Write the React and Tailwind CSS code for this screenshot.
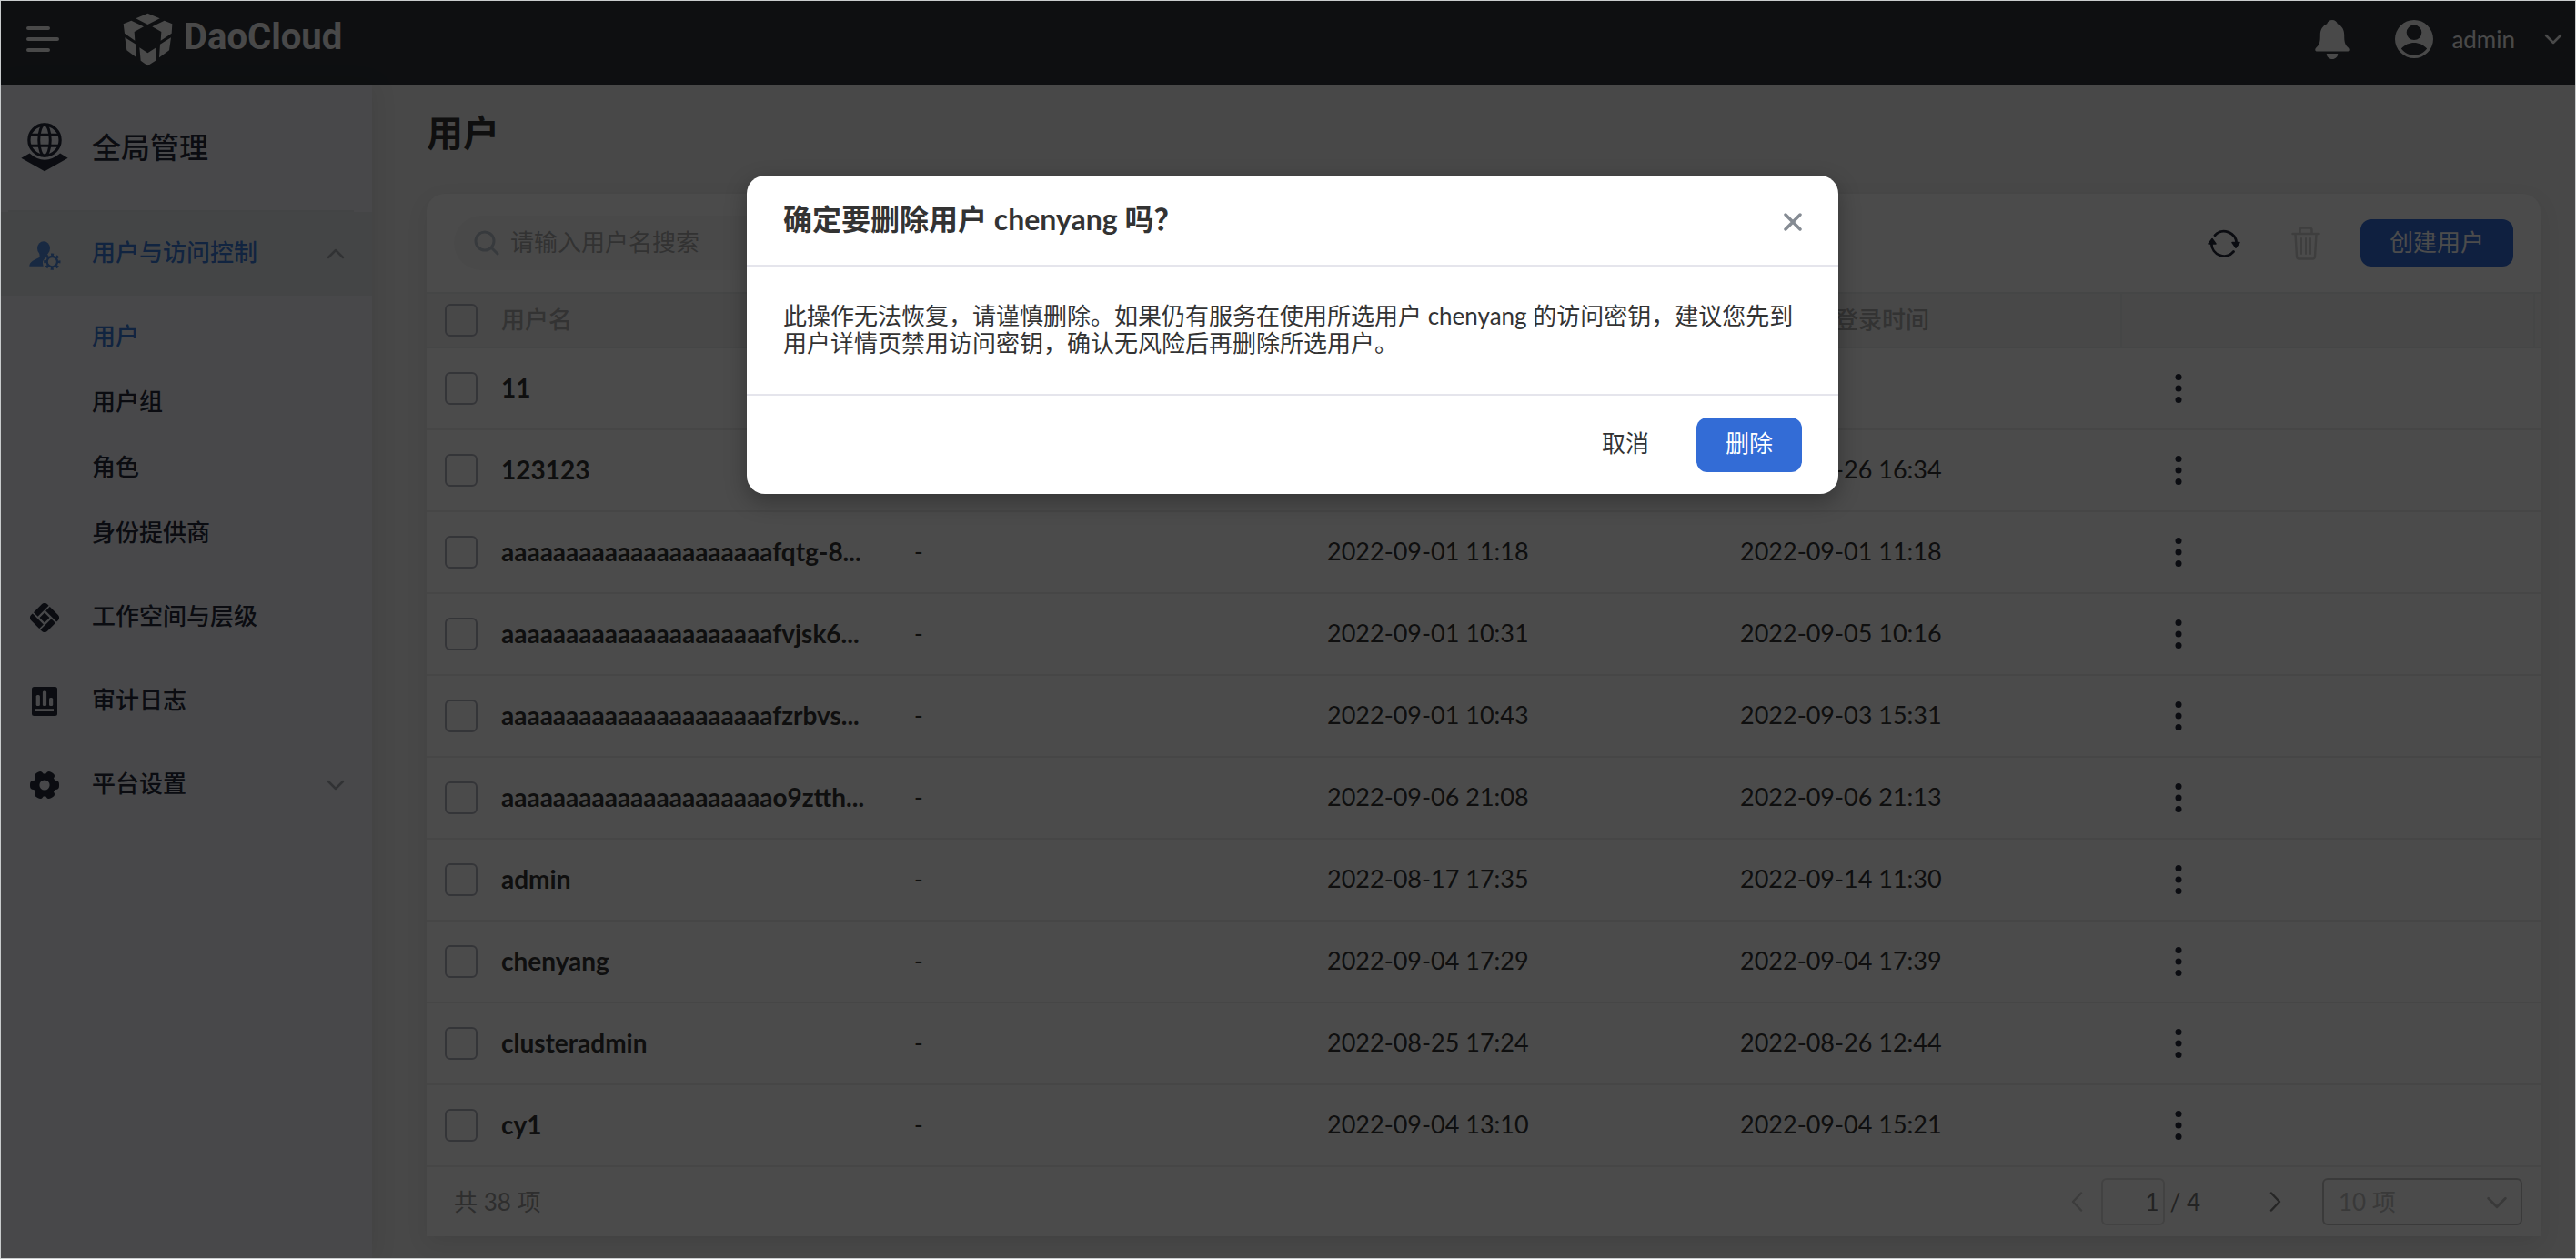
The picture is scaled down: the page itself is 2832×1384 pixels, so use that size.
import React from 'react';

const navIcon = 'text-[#252b3b]';

function Logo() {
  return (
    <svg viewBox="405 39 165 177" className="h-[59px] w-[55px] fill-current" aria-hidden="true">
      <path d="M448 58 487 41l40 17-40 20z" />
      <path d="m407 76 26-11 41 20-31 17 2 29-34-24z" />
      <path d="m568 76-26-11-40 20 30 17-2 29 36-24z" />
      <path d="m412 121 36 22 2 44-32-24z" />
      <path d="m564 121-36 22-3 44 33-24z" />
      <path d="m460 154 27 18 28-18-2 43-26 17-23-17z" />
    </svg>
  );
}

function GlobeIcon() {
  return (
    <svg viewBox="68 403 158 162" className={`h-[54px] w-[52px] ${navIcon}`} fill="none" stroke="currentColor" aria-hidden="true">
      <circle cx="147" cy="460" r="52" strokeWidth="10" />
      <ellipse cx="147" cy="460" rx="19" ry="52" strokeWidth="9" />
      <path d="M97 442h100M97 479h100" strokeWidth="9" />
      <path d="m69 520 28-16q50 44 102 0l26 16-78 44z" fill="currentColor" stroke="none" />
    </svg>
  );
}

function UserGearIcon() {
  return (
    <svg viewBox="95 796 105 96" className="mt-1 h-8 w-[35px] text-[#5089dc]" fill="currentColor" aria-hidden="true">
      <ellipse cx="143" cy="820" rx="21" ry="23" />
      <path d="M96 879c0-16 18-22 34-30l-1-12h27l-1 10c-10 6-16 14-15 22l2 10z" />
      <circle cx="171" cy="864" r="17" fill="none" stroke="currentColor" strokeWidth="7" />
      <circle cx="171" cy="864" r="23" fill="none" stroke="currentColor" strokeWidth="9" strokeDasharray="9 9.06" strokeDashoffset="4.5" />
    </svg>
  );
}

function WorkspaceIcon() {
  return (
    <svg viewBox="1.5 1.5 29 29" className={`size-8 ${navIcon}`} fill="currentColor" aria-hidden="true">
      <clipPath id="ws-clip">
        <rect x="4.5" y="4.5" width="23" height="23" rx="4" />
      </clipPath>
      <g transform="rotate(45 16 16)" clipPath="url(#ws-clip)">
        <path d="M12.500 12.500h7v7h-7zM12 4h16v6.500H12zM21.500 12H28v16h-6.500zM4 21.500h16V28H4zM4 4h6.500v16H4z" />
      </g>
    </svg>
  );
}

function AuditIcon() {
  return (
    <svg viewBox="0 0 28 32" className={`h-8 w-7 ${navIcon}`} aria-hidden="true">
      <rect width="28" height="32" rx="2.500" fill="currentColor" />
      <g fill="#f0f2f7">
        <rect x="4.700" y="9" width="4.200" height="12" rx="1.500" />
        <rect x="11.900" y="4.600" width="4.200" height="16.400" rx="1.500" />
        <rect x="19" y="12" width="4.200" height="9" rx="1.500" />
        <rect x="4" y="24.200" width="20" height="2.800" />
      </g>
    </svg>
  );
}

function GearIcon() {
  return (
    <svg viewBox="0 0 32 32" className={`size-8 ${navIcon}`} fill="currentColor" aria-hidden="true">
      <circle cx="16" cy="16" r="12.500" />
      <rect y="11" width="32" height="10" rx="4" />
      <rect y="11" width="32" height="10" rx="4" transform="rotate(60 16 16)" />
      <rect y="11" width="32" height="10" rx="4" transform="rotate(120 16 16)" />
      <circle cx="16" cy="16" r="5.600" fill="#f0f2f7" />
    </svg>
  );
}

function Chevron({ d, className }) {
  return (
    <svg viewBox="0 0 20 12" className={className} fill="none" stroke="currentColor" strokeWidth="2.500" strokeLinecap="round" strokeLinejoin="round" aria-hidden="true">
      <path d={d} />
    </svg>
  );
}

const DOWN = 'M2 2l8 8 8-8';
const UP = 'M2 10l8-8 8 8';

function Header() {
  return (
    <header className="flex h-[92px] items-center bg-[#2f343a] pr-[14px] pb-2 pl-7 text-[#f4f4f6]">
      <button type="button" aria-label="菜单">
        <svg viewBox="0 0 36 28" className="h-7 w-9" stroke="currentColor" strokeWidth="4" strokeLinecap="round" aria-hidden="true">
          <path d="M2 2h22M2 14h32M2 26h22" />
        </svg>
      </button>
      <a href="#home" className="ml-[70px] flex items-center gap-3">
        <Logo />
        <span className="pb-1 font-[Roboto,sans-serif] text-[40px] leading-[48px] font-bold">DaoCloud</span>
      </a>
      <button type="button" aria-label="通知" className="ml-auto">
        <svg viewBox="0 0 38 43" className="h-[43px] w-[38px] fill-current" aria-hidden="true">
          <path d="M19 0c3 0 5 1.800 5.800 4.300 5 2.200 7.400 6.700 7.400 12.200 0 7 .5 10.500 4.300 13.800 2.100 1.900 1.500 4.200-1 4.200h-33c-2.500 0-3.100-2.300-1-4.200 3.800-3.300 4.300-6.800 4.300-13.800 0-5.500 2.400-10 7.400-12.200C14 1.800 16 0 19 0z" />
          <path d="M12.800 37h12.400c0 3.500-2.800 6-6.200 6s-6.200-2.500-6.200-6z" />
        </svg>
      </button>
      <button type="button" className="ml-[50px] flex items-center">
        <svg viewBox="0 0 42 42" className="size-[42px] fill-current" aria-hidden="true">
          <path fillRule="evenodd" d="M21 0a21 21 0 1 1 0 42 21 21 0 0 1 0-42zm0 5.500a8.300 8.300 0 1 0 0 16.600 8.300 8.300 0 0 0 0-16.600zM6.800 31.500C11 36.500 15.500 38.700 21 38.700s10-2.200 14.200-7.200c-4-4.600-9-6.600-14.200-6.600s-10.200 2-14.200 6.600z" />
        </svg>
        <span className="ml-5 text-[26px] leading-8">admin</span>
        <Chevron d={DOWN} className="ml-8 h-3 w-5" />
      </button>
    </header>
  );
}

function NavItem({ icon, label, active, chevron }) {
  return (
    <a
      href="#nav"
      className={`flex h-[92px] items-center pr-[30px] ${active ? 'bg-[#e5e7e9] text-[#3b79d8]' : 'text-[#252b3b]'}`}
    >
      <span className="flex w-24 justify-center">{icon}</span>
      <span className="ml-1 flex-1 pb-1">{label}</span>
      {chevron && <Chevron d={chevron} className="h-3 w-5 text-[#a6a9b0]" />}
    </a>
  );
}

function Sidebar() {
  return (
    <nav className="z-10 w-[408px] shrink-0 bg-[#f0f2f7] text-[26px] leading-8 font-medium shadow-[4px_0_24px_rgba(0,0,0,0.08)]">
      <div className="flex h-[138px] items-center pr-5 pl-[22px]">
        <GlobeIcon />
        <h2 className="ml-[26px] text-[32px] leading-10 text-[#252b3b]">全局管理</h2>
      </div>
      <div className="mr-5 ml-2 h-0.5 bg-[#e2e4e8]" />
      <NavItem icon={<UserGearIcon />} label="用户与访问控制" active chevron={UP} />
      <ul className="py-2.5">
        {['用户', '用户组', '角色', '身份提供商'].map((label, i) => (
          <li key={label}>
            <a href="#sub" className={`flex h-[72px] items-center pb-1 pl-[100px] ${i === 0 ? 'text-[#3b79d8]' : 'text-[#252b3b]'}`}>
              {label}
            </a>
          </li>
        ))}
      </ul>
      <NavItem icon={<WorkspaceIcon />} label="工作空间与层级" />
      <NavItem icon={<AuditIcon />} label="审计日志" />
      <NavItem icon={<GearIcon />} label="平台设置" chevron={DOWN} />
    </nav>
  );
}

function Toolbar() {
  return (
    <div className="flex h-[108px] items-center px-[30px]">
      <label className="flex h-[60px] w-[600px] items-center gap-3 rounded-full bg-[#f5f5f5] pl-[22px]">
        <svg viewBox="0 0 28 28" className="size-7 text-[#b9c1cc]" fill="none" stroke="currentColor" strokeWidth="3" strokeLinecap="round" aria-hidden="true">
          <circle cx="12" cy="12" r="10" />
          <path d="m19.500 19.500 6.500 6.500" />
        </svg>
        <input type="search" aria-label="搜索用户" placeholder="请输入用户名搜索" className="flex-1 bg-transparent pb-0.5 outline-none placeholder:text-[#a8a8a8]" />
      </label>
      <button type="button" aria-label="刷新" className="ml-auto text-[#252b3b]">
        <svg viewBox="0 0 36 31" className="h-[31px] w-9" fill="none" stroke="currentColor" strokeWidth="2.800" strokeLinecap="round" aria-hidden="true">
          <path d="M8 6.700A13.700 13.700 0 0 1 31.700 15M28.500 24.500A13.700 13.700 0 0 1 4.300 16" />
          <path d="M27 14.500h8l-4 5.800zM1 16h8l-4-5.500z" fill="currentColor" strokeWidth="1.500" strokeLinejoin="round" />
        </svg>
      </button>
      <button type="button" aria-label="删除" disabled className="ml-14 text-[#d0d0d0]">
        <svg viewBox="0 0 32 37" className="h-[37px] w-8" fill="none" stroke="currentColor" strokeWidth="2.500" strokeLinecap="round" strokeLinejoin="round" aria-hidden="true">
          <path d="M1.500 8h29M4.500 8l1.500 25q.2 2.500 2.500 2.500h15q2.300 0 2.500-2.500L27.500 8M9.500 8V4q0-2.500 2.500-2.500h8q2.500 0 2.500 2.500v4" />
          <path d="M11 13v17M16 13v17M21 13v17" strokeWidth="2" />
        </svg>
      </button>
      <button type="button" className="ml-11 h-[52px] rounded-xl bg-[#336cd6] px-8 pb-0.5 text-white">创建用户</button>
    </div>
  );
}

const rows = [
  ['11', '', '', ''],
  ['123123', '', '', '2022-08-26 16:34'],
  ['aaaaaaaaaaaaaaaaaaaaafqtg-8...', '-', '2022-09-01 11:18', '2022-09-01 11:18'],
  ['aaaaaaaaaaaaaaaaaaaaafvjsk6...', '-', '2022-09-01 10:31', '2022-09-05 10:16'],
  ['aaaaaaaaaaaaaaaaaaaaafzrbvs...', '-', '2022-09-01 10:43', '2022-09-03 15:31'],
  ['aaaaaaaaaaaaaaaaaaaaao9ztth...', '-', '2022-09-06 21:08', '2022-09-06 21:13'],
  ['admin', '-', '2022-08-17 17:35', '2022-09-14 11:30'],
  ['chenyang', '-', '2022-09-04 17:29', '2022-09-04 17:39'],
  ['clusteradmin', '-', '2022-08-25 17:24', '2022-08-26 12:44'],
  ['cy1', '-', '2022-09-04 13:10', '2022-09-04 15:21'],
];

function Checkbox({ label }) {
  return (
    <input
      type="checkbox"
      aria-label={label}
      className="block size-9 appearance-none rounded-md border-2 border-[#b0b1bd]"
    />
  );
}

function UserTable() {
  return (
    <table className="w-full table-fixed border-separate border-spacing-0 text-left text-[#333]">
      <colgroup>
        <col className="w-[54px]" />
        <col />
        <col />
        <col />
        <col />
        <col />
      </colgroup>
      <thead>
        <tr className="h-[62px] bg-[#f2f2f2] text-[#aaa]">
          <th className="border-y-2 border-[#e8eaea] p-0 pl-5">
            <Checkbox label="全选" />
          </th>
          {['用户名', '', '', '最近一次登录时间', ''].map((h, i) => (
            <th key={i} className="border-y-2 border-[#e8eaea] p-0 font-medium">
              <div className="flex h-[58px] items-center justify-between pr-1.5 pl-7">
                <span className="pb-0.5">{h}</span>
                <span className="h-full w-0.5 bg-[#e8eaea]" />
              </div>
            </th>
          ))}
        </tr>
      </thead>
      <tbody>
        {rows.map(([name, desc, created, last]) => (
          <tr key={name} className="h-[90px]">
            <td className="border-b-2 border-[#ececec] p-0 pl-5">
              <Checkbox label={`选择 ${name}`} />
            </td>
            <td className="border-b-2 border-[#ececec] px-7 pt-0 pb-0.5 text-[28px] font-bold whitespace-nowrap">{name}</td>
            <td className="border-b-2 border-[#ececec] px-7 pt-0 pb-0.5">{desc}</td>
            <td className="border-b-2 border-[#ececec] px-7 pt-0 pb-0.5 text-[27px]">{created}</td>
            <td className="border-b-2 border-[#ececec] px-7 pt-0 pb-0.5 text-[27px]">{last}</td>
            <td className="border-b-2 border-[#ececec] px-7 py-0">
              <button type="button" aria-label={`${name} 更多操作`} className="flex size-14 items-center justify-center text-[#252b3b]">
                <svg viewBox="0 0 8 32" className="h-8 w-2 fill-current" aria-hidden="true">
                  <circle cx="4" cy="3.500" r="3.500" />
                  <circle cx="4" cy="16" r="3.500" />
                  <circle cx="4" cy="28.500" r="3.500" />
                </svg>
              </button>
            </td>
          </tr>
        ))}
      </tbody>
    </table>
  );
}

function Pagination() {
  return (
    <div className="flex h-[76px] items-center pr-5 pl-[30px] text-[#999]">
      <span>共 38 项</span>
      <button type="button" aria-label="上一页" disabled className="ml-auto text-[#c8c8c8]">
        <svg viewBox="0 0 14 22" className="h-[22px] w-3.5" fill="none" stroke="currentColor" strokeWidth="2.500" strokeLinecap="round" strokeLinejoin="round" aria-hidden="true">
          <path d="M12 1.500 3 11l9 9.500" />
        </svg>
      </button>
      <input aria-label="页码" defaultValue="1" className="ml-5 h-[52px] w-[70px] rounded-md border-2 border-[#dcdcdc] bg-transparent px-1 text-right text-[#777]" />
      <span className="ml-1.5 text-[#777]">/ 4</span>
      <button type="button" aria-label="下一页" className="ml-[76px] text-[#808080]">
        <svg viewBox="0 0 14 22" className="h-[22px] w-3.5" fill="none" stroke="currentColor" strokeWidth="2.500" strokeLinecap="round" strokeLinejoin="round" aria-hidden="true">
          <path d="m2 1.500 9 9.500-9 9.500" />
        </svg>
      </button>
      <div className="relative ml-11 text-[#c0c0c0]">
        <select aria-label="每页条数" className="h-[52px] w-[220px] appearance-none rounded-md border-2 border-[#c4c4c4] bg-transparent pl-4">
          <option>10 项</option>
        </select>
        <Chevron d={DOWN} className="pointer-events-none absolute top-5 right-4 h-3.5 w-6" />
      </div>
    </div>
  );
}

function DeleteDialog() {
  return (
    <div className="absolute inset-0 z-20 flex items-start justify-center bg-black/70 pt-[192px] pl-2.5">
      <section
        role="dialog"
        aria-modal="true"
        aria-labelledby="dialog-title"
        className="w-[1200px] rounded-[20px] bg-white text-[#333] shadow-[0_8px_24px_rgba(0,0,0,0.3)]"
      >
        <header className="flex h-[100px] items-center justify-between border-b-2 border-[#e5e5ec] px-10">
          <h2 id="dialog-title" className="pb-0.5 text-[32px] leading-10 font-bold">确定要删除用户 chenyang 吗？</h2>
          <button type="button" aria-label="关闭" className="pt-1 text-[#858b93]">
            <svg viewBox="0 0 20 20" className="size-5" stroke="currentColor" strokeWidth="3.500" strokeLinecap="round" aria-hidden="true">
              <path d="m2 2 16 16M18 2 2 18" />
            </svg>
          </button>
        </header>
        <p className="px-10 pt-[39px] pb-[41px] leading-[30px]">
          此操作无法恢复，请谨慎删除。如果仍有服务在使用所选用户 chenyang 的访问密钥，建议您先到用户详情页禁用访问密钥，确认无风险后再删除所选用户。
        </p>
        <footer className="flex justify-end gap-5 border-t-2 border-[#e5e5ec] px-10 py-6">
          <button type="button" className="h-[60px] w-[116px] rounded-xl pb-1">取消</button>
          <button type="button" className="h-[60px] w-[116px] rounded-xl bg-[#336cd6] pb-1 text-white">删除</button>
        </footer>
      </section>
    </div>
  );
}

export default function App() {
  return (
    <div lang="zh-CN" className="relative flex min-h-screen flex-col overflow-hidden border border-[#c9cccd] bg-[#f0f0f0] font-[Lato,'Noto_Sans_CJK_SC',sans-serif] text-[26px] leading-8">
      <Header />
      <div className="flex flex-1">
        <Sidebar />
        <main className="flex-1 pt-[29px] pr-[38px] pb-6 pl-[60px]">
          <h1 className="text-[40px] leading-[48px] font-bold text-[#333]">用户</h1>
          <section className="mt-[43px] rounded-t-[20px] bg-[#fcfcfc] shadow-[0_8px_24px_rgba(0,0,0,0.08)]">
            <Toolbar />
            <UserTable />
            <Pagination />
          </section>
        </main>
      </div>
      <DeleteDialog />
    </div>
  );
}
